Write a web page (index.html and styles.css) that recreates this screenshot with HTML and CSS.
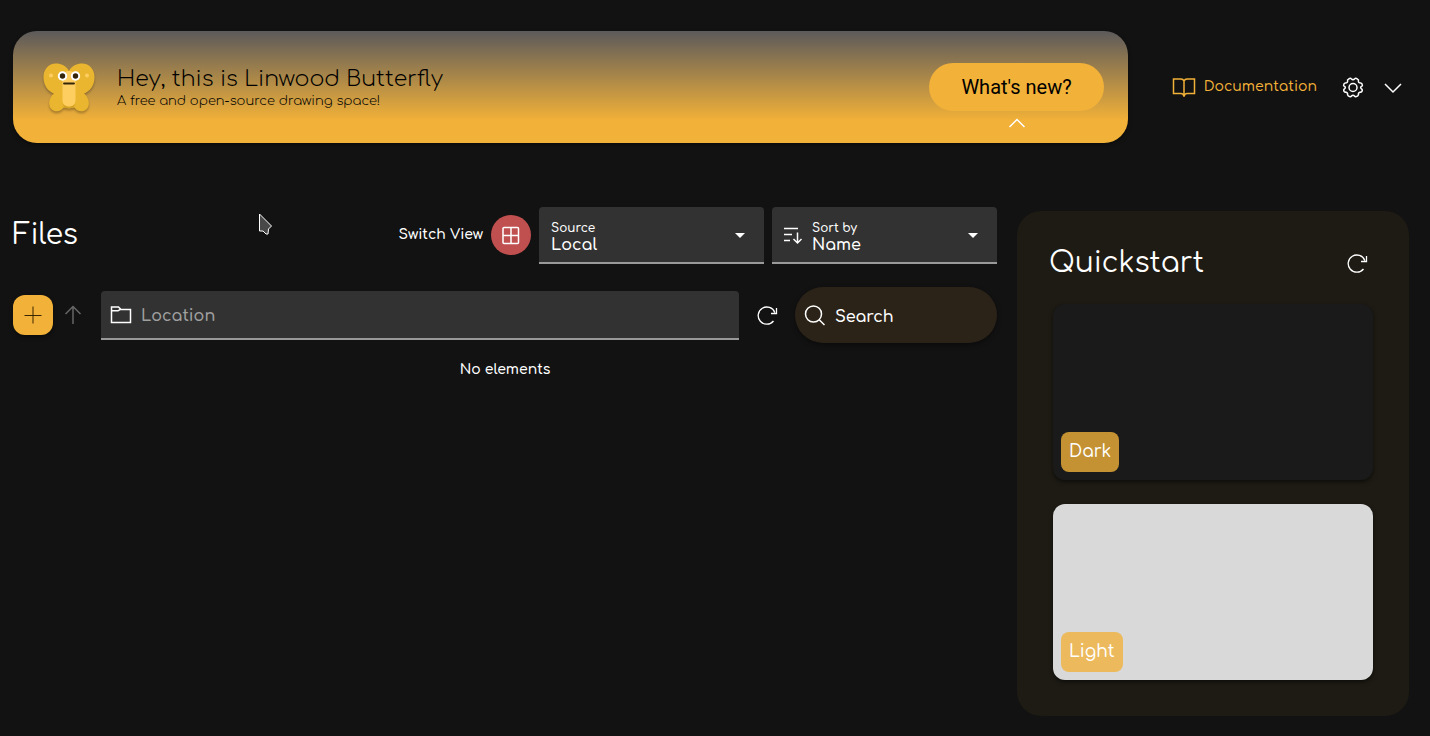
FILE: index.html
```html
<!DOCTYPE html>
<html lang="en">
<head>
<meta charset="utf-8">
<meta name="viewport" content="width=device-width, initial-scale=1">
<title>Linwood Butterfly</title>
<link rel="stylesheet" href="styles.css">
</head>
<body>
<header class="top">
  <section class="banner">
    <svg class="logo" viewBox="0 0 52 52" aria-hidden="true">
      <g fill="#ebb62f">
        <path d="M26 8C23 2.500 18 0.500 13 0.500C5.500 0.500 0.500 6.500 0.500 14C0.500 23 5 28 11.500 31H40.500C47 28 51.500 23 51.500 14C51.500 6.500 46.500 0.500 39 0.500C34 0.500 29 2.500 26 8Z"/>
        <path d="M11.500 30C6 34.500 5 41 7.500 45C11 50 18 49 20.500 44.500L26 45.500L31.500 44.500C34 49 41 50 44.500 45C47 41 46 34.500 40.500 30Z"/>
      </g>
      <path d="M19.500 41Q26 46 32.500 41L30 45H22Z" fill="#d3a126"/>
      <rect x="19.500" y="8" width="13" height="35.500" rx="6" fill="#ffce60"/>
      <circle cx="8" cy="12.500" r="2" fill="#ffce60"/><circle cx="44" cy="12.500" r="2" fill="#ffce60"/>
      <circle cx="19.500" cy="13" r="4.700" fill="#fff"/><circle cx="32.500" cy="13" r="4.700" fill="#fff"/>
      <circle cx="19.500" cy="13" r="2.700" fill="#33240a"/><circle cx="32.500" cy="13" r="2.700" fill="#33240a"/>
      <path d="M21 20.500H31" stroke="#33240a" stroke-width="1.800" stroke-linecap="round"/>
    </svg>
    <div class="greeting">
      <h1>Hey, this is Linwood Butterfly</h1>
      <p>A free and open-source drawing space!</p>
    </div>
    <div class="news">
      <button class="news-button" type="button">What's new?</button>
      <svg class="caret-up" viewBox="0 0 18 10" aria-hidden="true"><path d="M1.500 9L9 1.500L16.500 9"/></svg>
    </div>
  </section>
  <nav class="links">
    <a class="docs" href="#docs">
      <svg viewBox="0 0 24 24" aria-hidden="true"><path d="M12 6C11.500 4.800 10.500 4 9 4H1.500V18.500H9C10.500 18.500 11.500 19.200 12 21.500C12.500 19.200 13.500 18.500 15 18.500H22.500V4H15C13.500 4 12.500 4.800 12 6ZM12 6V21.500"/></svg>
      <span>Documentation</span>
    </a>
    <button class="icon-button" type="button" aria-label="Settings">
      <svg viewBox="0 0 24 24" aria-hidden="true" class="gear"><circle cx="12" cy="12.500" r="4"/><path d="M7.200 4.300Q9.500 2.700 10.200 3.700Q12 5.500 13.800 3.700Q14.500 2.700 16.800 4.300Q17.800 4.900 17.400 5.700Q17.200 8 19.800 8.100Q21.300 8.300 21.400 10.500Q21.300 11.100 20.500 11.400Q18.800 12.500 20.500 13.800Q21.800 14.500 20.900 16.500Q20.600 17.300 19.500 17.100Q17.100 17.500 17.400 19.800Q17.200 21.100 14.800 21.700Q14 21.800 13.500 21Q12 19.300 10.500 21Q10 21.800 9.200 21.700Q6.800 21.100 6.600 19.800Q6.900 17.500 4.500 17.100Q3.400 17.300 3.100 16.500Q2.200 14.500 3.500 13.800Q5.200 12.500 3.500 11.400Q2.700 11.100 2.600 10.500Q2.700 8.300 4.200 8.100Q6.800 8 6.600 5.700Q6.200 4.900 7.200 4.300Z"/></svg>
    </button>
    <button class="icon-button" type="button" aria-label="Collapse">
      <svg viewBox="0 0 24 24" aria-hidden="true"><path d="M4 9L12 17L20 9"/></svg>
    </button>
  </nav>
</header>

<main class="content">
  <section class="files">
    <div class="row head">
      <h2>Files</h2>
      <div class="view">
        <span id="view-label">Switch View</span>
        <button class="view-button" type="button" aria-labelledby="view-label">
          <svg viewBox="0 0 24 24" aria-hidden="true"><rect x="4" y="4.500" width="15.500" height="16" rx="1"/><path d="M12 4.500V20.500M4 12.500H19.500"/></svg>
        </button>
      </div>
      <div class="field">
        <div class="pair">
          <label for="source">Source</label>
          <select id="source"><option>Local</option></select>
        </div>
        <svg class="arrow" viewBox="0 0 10 5" aria-hidden="true"><path d="M0 0H10L5 5Z"/></svg>
      </div>
      <div class="field">
        <svg class="lead" viewBox="0 0 24 24" aria-hidden="true"><path d="M4 4.500H18M4 10.500H12M4 16.500H10M17.500 8.500V19M13.500 15L17.500 19L21.500 15"/></svg>
        <div class="pair">
          <label for="sort">Sort by</label>
          <select id="sort"><option>Name</option></select>
        </div>
        <svg class="arrow" viewBox="0 0 10 5" aria-hidden="true"><path d="M0 0H10L5 5Z"/></svg>
      </div>
    </div>
    <div class="row tools">
      <button class="add" type="button" aria-label="Create">
        <svg viewBox="0 0 24 24" aria-hidden="true"><path d="M12 3.500V20.500M3.500 12.500H20.500"/></svg>
      </button>
      <button class="icon-button up" type="button" aria-label="Up" disabled>
        <svg viewBox="0 0 24 24" aria-hidden="true"><path d="M12 21V4M4.500 11L12 3.500L19.500 11"/></svg>
      </button>
      <label class="location">
        <svg viewBox="0 0 24 24" aria-hidden="true"><path d="M2.500 20.500V5H9.500L12 7.500H21.500V20.500ZM2.500 8.800H9L11 7.500H12"/></svg>
        <input type="text" placeholder="Location" aria-label="Location">
      </label>
      <button class="icon-button reload" type="button" aria-label="Refresh">
        <svg viewBox="0 0 24 24" aria-hidden="true"><path d="M18.500 18A8.600 8.600 0 1 1 19.800 9.500M21.500 5V10.500H16"/></svg>
      </button>
      <label class="search">
        <svg viewBox="0 0 24 24" aria-hidden="true"><circle cx="10.500" cy="11" r="8"/><path d="M16.200 16.700L21.500 22"/></svg>
        <input type="text" placeholder="Search" aria-label="Search">
      </label>
    </div>
    <p class="empty">No elements</p>
  </section>

  <aside class="quick">
    <div class="quick-head">
      <h2>Quickstart</h2>
      <button class="icon-button" type="button" aria-label="Refresh templates">
        <svg viewBox="0 0 24 24" aria-hidden="true"><path d="M18.500 18A8.600 8.600 0 1 1 19.800 9.500M21.500 5V10.500H16"/></svg>
      </button>
    </div>
    <button class="card dark" type="button"><span class="tag">Dark</span></button>
    <button class="card light" type="button"><span class="tag">Light</span></button>
  </aside>
</main>
<svg class="pointer" viewBox="0 0 14 22" aria-hidden="true"><path d="M1.500 1V18H5L8 21H10L10.500 16L13.500 13Z"/></svg>
</body>
</html>
```
FILE: styles.css
```css
* { box-sizing: border-box; }

body {
  margin: 0;
  padding: 31px 21px 20px 13px;
  min-height: 100vh;
  background: #121212;
  color: #fff;
  font-family: Comfortaa, Inter, sans-serif;
  font-size: 14px;
  font-weight: 600;
  line-height: 20px;
}

h1, h2, p { margin: 0; }
h2 { font-size: 28px; line-height: 40px; font-weight: 400; }

button, input, select { font: inherit; color: inherit; border: 0; padding: 0; margin: 0; background: none; }
button { cursor: pointer; }

svg { flex: none; width: 24px; height: 24px; fill: none; stroke: currentColor; stroke-width: 1.5; }

.top { display: flex; align-items: center; gap: 44px; }

.banner {
  flex: 1;
  display: flex;
  align-items: center;
  gap: 22px;
  height: 112px;
  padding: 0 24px 0 30px;
  border-radius: 24px;
  background: linear-gradient(#5c5a5b, #f2b138 80%);
  box-shadow: 0 2px 4px #0006;
  color: #000;
}
.logo { width: 52px; height: 52px; margin-top: 4px; stroke: none; filter: drop-shadow(0 2px 1px #0004); }
.greeting { flex: 1; padding-top: 2px; }
.greeting h1 { font-size: 22px; line-height: 26px; font-weight: 300; }
.greeting p { font-size: 13px; line-height: 18px; font-weight: 300; }

.news { display: flex; flex-direction: column; align-items: center; gap: 7px; padding-top: 16px; }
.news-button {
  height: 48px;
  padding: 0 32px;
  border-radius: 24px;
  background: #f2b138;
  font-family: Roboto, sans-serif;
  font-size: 20px;
  font-weight: 400;
}
.caret-up { width: 18px; height: 10px; stroke: #fff; }

.links { display: flex; align-items: center; margin-right: -4px; }
.docs { display: flex; align-items: center; gap: 8px; margin-right: 16px; color: #f2b138; font-weight: 500; text-decoration: none; }

.icon-button { display: grid; place-items: center; width: 40px; height: 40px; }

.content { display: flex; align-items: flex-start; gap: 20px; margin-top: 64px; }
.files { flex: 1; min-width: 0; }
.row { display: flex; align-items: center; }

.head { gap: 8px; }
.head h2 { flex: 1; padding-bottom: 2px; }
.view { display: flex; align-items: center; gap: 8px; padding-bottom: 2px; }
.view-button { display: grid; place-items: center; width: 40px; height: 40px; border-radius: 50%; background: #c04f4f; }

.field {
  position: relative;
  display: flex;
  align-items: center;
  gap: 8px;
  width: 225px;
  height: 57px;
  padding-left: 12px;
  border-radius: 4px 4px 0 0;
  border-bottom: 2px solid #999;
  background: #323232;
}
.field:has(.lead) { padding-left: 8px; }
.lead { margin-top: 2px; }
.pair { flex: 1; display: flex; flex-direction: column; padding-top: 4px; }
.pair label { font-size: 12px; line-height: 16px; }
.pair select { appearance: none; width: 100%; font-size: 16px; line-height: 18px; outline: 0; }
.pair option { background: #323232; }
.arrow { position: absolute; right: 19px; top: 26px; width: 10px; height: 5px; fill: #fff; stroke: none; pointer-events: none; }

.tools { margin-top: 23px; }
.add {
  display: grid;
  place-items: center;
  width: 40px;
  height: 40px;
  border-radius: 12px;
  background: #f2b138;
  color: #3a2600;
  box-shadow: 0 2px 4px #0006;
}
.add svg { stroke-width: 1; }
.up { color: #666; }
.location {
  flex: 1;
  display: flex;
  align-items: center;
  gap: 8px;
  height: 49px;
  margin: 0 8px;
  padding: 0 8px;
  border-radius: 4px 4px 0 0;
  border-bottom: 2px solid #999;
  background: #323232;
}
.location input, .search input { flex: 1; width: 0; min-width: 0; padding-top: 4px; font-size: 16px; line-height: 24px; outline: 0; }
.location input::placeholder { color: #a0a0a0; opacity: 1; }
.reload { margin-right: 8px; }
.search {
  display: flex;
  align-items: center;
  gap: 8px;
  width: 202px;
  height: 56px;
  padding: 0 8px;
  border-radius: 28px;
  background: #2b2318;
  box-shadow: 0 2px 5px #0006;
}
.search input::placeholder { color: #fff; opacity: 1; }
.empty { margin-top: 17px; text-align: center; }

.quick {
  display: flex;
  flex-direction: column;
  gap: 24px;
  width: 392px;
  margin-top: 4px;
  padding: 34px 36px 36px;
  border-radius: 24px;
  background: #1e1b14;
}
.quick-head { display: flex; justify-content: space-between; align-items: center; height: 35px; margin: 0 -4px; }
.quick-head svg, .reload svg { stroke-width: 1.3; }
.card { display: flex; align-items: flex-end; height: 176px; padding: 8px; border-radius: 12px; box-shadow: 0 2px 4px #0008; }
.dark { background: #1a1a1a; }
.light { background: #d9d9d9; }
.tag { height: 40px; padding: 0 8px; border-radius: 8px; background: #c49233; font-size: 17px; font-weight: 500; line-height: 40px; }
.light .tag { background: #ecba5c; }

.pointer { position: absolute; left: 258px; top: 213px; width: 14px; height: 22px; fill: #484848; stroke: #fff; stroke-width: 1; pointer-events: none; }
```
